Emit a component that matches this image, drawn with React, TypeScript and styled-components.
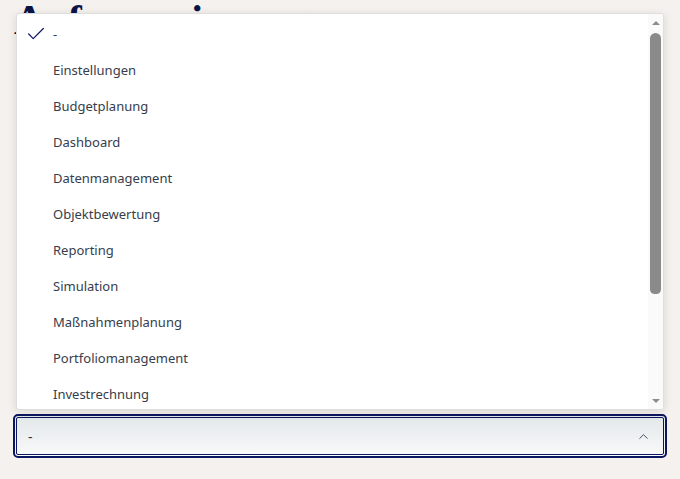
import * as React from "react";
import styled, { createGlobalStyle } from "styled-components";
import { Check, ChevronUp } from "lucide-react";

const GlobalStyle = createGlobalStyle`
  html, body {
    margin: 0;
    padding: 0;
    background: #f4f1ee;
  }
  * {
    box-sizing: border-box;
  }
`;

const Page = styled.div`
  min-height: 479px;
  display: flex;
  flex-direction: column;
  padding: 0 13px 21px;
  font-family: "Noto Sans", "Open Sans", sans-serif;
`;

const Title = styled.h1`
  margin: 0;
  margin-top: -6px;
  padding-left: 1px;
  font-family: "Liberation Serif", serif;
  font-size: 42px;
  font-weight: 700;
  line-height: 52px;
  color: #0c1445;
  white-space: nowrap;
`;

const Spacer = styled.div`
  flex: 1;
`;

const Field = styled.div`
  position: relative;
`;

const Trigger = styled.button`
  width: 100%;
  height: 44px;
  display: flex;
  align-items: center;
  justify-content: space-between;
  padding: 0 14px 0 13px;
  margin: 0;
  border: 2px solid #0b1660;
  outline: 1px solid #0b1660;
  outline-offset: -4px;
  border-radius: 5px;
  background: linear-gradient(180deg, #e2e7e9 0%, #f9fafa 100%);
  color: #2f3645;
  font-family: inherit;
  font-size: 14px;
  cursor: pointer;
  text-align: left;
`;

const Popover = styled.div`
  position: absolute;
  left: 3px;
  right: 3px;
  bottom: calc(100% + 4px);
  height: 397px;
  display: flex;
  background: #ffffff;
  border: 1px solid #dedede;
  border-radius: 3px;
  box-shadow: 0 2px 10px rgba(40, 30, 20, 0.12);
  overflow: hidden;
`;

const Listbox = styled.ul`
  flex: 1;
  margin: 0;
  padding: 2px 0;
  list-style: none;
  overflow: hidden;
`;

const Scrollbar = styled.div`
  width: 15px;
  display: flex;
  flex-direction: column;
  background: #fafafa;
`;

const ScrollButton = styled.div<{ $down?: boolean }>`
  height: 17px;
  display: flex;
  align-items: center;
  justify-content: center;

  &::before {
    content: "";
    width: 0;
    height: 0;
    border-left: 4px solid transparent;
    border-right: 4px solid transparent;
    ${(p) =>
      p.$down ? "border-top: 4px solid #8c8c8c;" : "border-bottom: 4px solid #8c8c8c;"}
  }
`;

const Track = styled.div`
  flex: 1;
  padding: 2px 2px 0;
`;

const Thumb = styled.div`
  width: 100%;
  background: #8a8a8a;
  border-radius: 6px 6px 5px 5px;
`;

const Option = styled.li<{ $selected?: boolean }>`
  height: 36px;
  display: flex;
  align-items: center;
  padding-left: 7px;
  gap: 6px;
  font-size: 13px;
  color: #363d4c;
  cursor: default;
`;

const Tick = styled.span`
  width: 23px;
  height: 22px;
  display: flex;
  align-items: center;
  justify-content: center;
  color: #141d6b;
`;

const options = [
  "-",
  "Einstellungen",
  "Budgetplanung",
  "Dashboard",
  "Datenmanagement",
  "Objektbewertung",
  "Reporting",
  "Simulation",
  "Maßnahmenplanung",
  "Portfoliomanagement",
  "Investrechnung",
  "Controlling",
  "Risikomanagement",
  "Vertragsmanagement",
  "Benutzerverwaltung",
];

// visible share of the list, used for the thumb length
const VISIBLE_ROWS = 10.9;

export default function App() {
  const [value] = React.useState("-");
  const thumbShare = Math.min(1, VISIBLE_ROWS / options.length);

  return (
    <>
      <GlobalStyle />
      <Page>
        <Title>Aufsummierung</Title>
        <Spacer />
        <Field>
          <Popover>
            <Listbox role="listbox">
              {options.map((opt) => (
                <Option key={opt} $selected={opt === value} role="option">
                  <Tick>{opt === value && <Check size={22} strokeWidth={1.4} />}</Tick>
                  {opt}
                </Option>
              ))}
            </Listbox>
            <Scrollbar>
              <ScrollButton />
              <Track>
                <Thumb style={{ height: `${thumbShare * 100}%` }} />
              </Track>
              <ScrollButton $down />
            </Scrollbar>
          </Popover>
          <Trigger type="button">
            <span>{value}</span>
            <ChevronUp size={15} strokeWidth={1.5} color="#3a4556" />
          </Trigger>
        </Field>
      </Page>
    </>
  );
}
